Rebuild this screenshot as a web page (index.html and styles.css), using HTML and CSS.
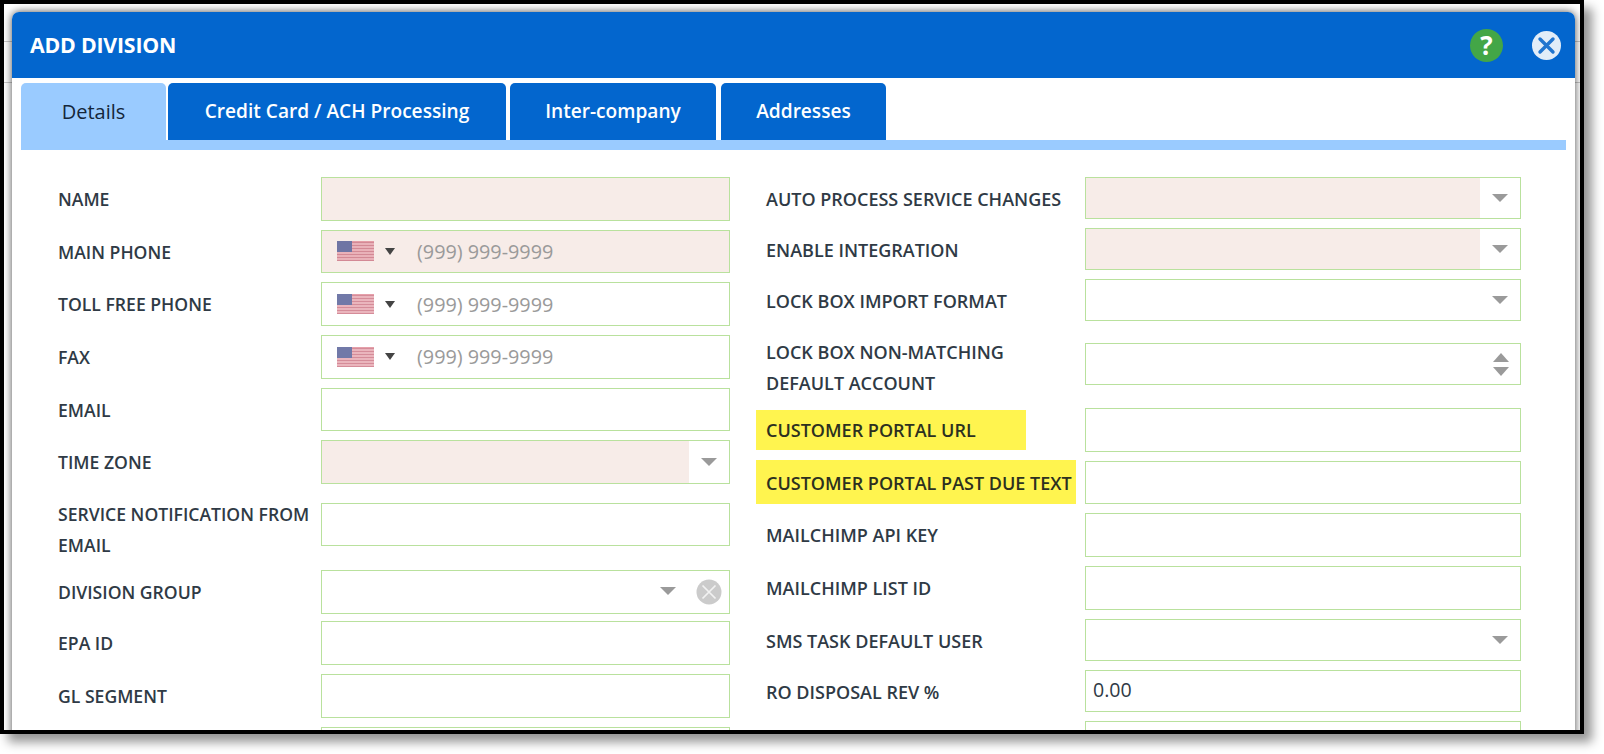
FILE: index.html
```html
<!DOCTYPE html>
<html lang="en">
<head>
<meta charset="utf-8">
<title>Add Division</title>
<link rel="stylesheet" href="styles.css">
</head>
<body>
<svg class="defs" width="0" height="0" aria-hidden="true">
  <defs>
    <g id="flag">
      <rect width="37" height="20" fill="#e08c98"/>
      <path d="M0 1.5h37M0 4.5h37M0 7.5h37M0 10.5h37M0 13.5h37M0 16.5h37M0 19.5h37" stroke="#c66c7c" stroke-width="1.2" opacity=".75"/>
      <path d="M0 3h37M0 6h37M0 9h37M0 12h37M0 15h37M0 18h37" stroke="#f1d4d8" stroke-width="1" opacity=".7"/>
      <rect width="15" height="11" fill="#525c96"/>
    </g>
  </defs>
</svg>
<div class="frame">
  <div class="modal">
    <header class="modal-head">
      <h1 class="modal-title">ADD DIVISION</h1>
      <div class="head-icons">
        <span class="help">?</span>
        <svg class="close" viewBox="0 0 29 29" aria-hidden="true">
          <circle cx="14.5" cy="14.5" r="14.5" fill="#e2edf8"/>
          <path d="M8 8l13 13M21 8l-13 13" stroke="#2175cf" stroke-width="3.4" stroke-linecap="round"/>
        </svg>
      </div>
    </header>
    <nav class="tabs">
      <a class="tab tab-active tab-details">Details</a>
      <a class="tab tab-card">Credit Card / ACH Processing</a>
      <a class="tab tab-inter">Inter-company</a>
      <a class="tab tab-addr">Addresses</a>
    </nav>
    <div class="tab-strip"></div>
    <form class="form">
      <div class="col col-left">
        <div class="row"><label class="lbl">NAME</label><div class="field req"></div></div>
        <div class="row"><label class="lbl">MAIN PHONE</label><div class="field req phone"><svg class="flag" viewBox="0 0 37 20"><use href="#flag"/></svg><i class="caret"></i><span class="ph">(999) 999-9999</span></div></div>
        <div class="row"><label class="lbl">TOLL FREE PHONE</label><div class="field phone"><svg class="flag" viewBox="0 0 37 20"><use href="#flag"/></svg><i class="caret"></i><span class="ph">(999) 999-9999</span></div></div>
        <div class="row"><label class="lbl">FAX</label><div class="field phone"><svg class="flag" viewBox="0 0 37 20"><use href="#flag"/></svg><i class="caret"></i><span class="ph">(999) 999-9999</span></div></div>
        <div class="row"><label class="lbl">EMAIL</label><div class="field"></div></div>
        <div class="row r-tz"><label class="lbl">TIME ZONE</label><div class="field select req-sel"><span class="sel-fill"></span><i class="arrow"></i></div></div>
        <div class="row r-svc"><label class="lbl lbl-two lbl-up4">SERVICE NOTIFICATION FROM EMAIL</label><div class="field"></div></div>
        <div class="row r-s"><label class="lbl">DIVISION GROUP</label><div class="field group"><i class="arrow"></i>
          <svg class="clear" viewBox="0 0 26 26" aria-hidden="true"><circle cx="13" cy="13" r="12.5" fill="#cbcbcb"/><path d="M6.5 6.5l13 13M19.5 6.5l-13 13" stroke="#f2f2f2" stroke-width="1.7"/></svg></div></div>
        <div class="row"><label class="lbl">EPA ID</label><div class="field"></div></div>
        <div class="row"><label class="lbl">GL SEGMENT</label><div class="field"></div></div>
        <div class="row"><label class="lbl"></label><div class="field"></div></div>
      </div>
      <div class="col col-right">
        <div class="row r-s"><label class="lbl">AUTO PROCESS SERVICE CHANGES</label><div class="field select sel-h req-sel"><span class="sel-fill"></span><i class="arrow"></i></div></div>
        <div class="row r-s"><label class="lbl">ENABLE INTEGRATION</label><div class="field select sel-h req-sel"><span class="sel-fill"></span><i class="arrow"></i></div></div>
        <div class="row r-lock"><label class="lbl">LOCK BOX IMPORT FORMAT</label><div class="field select sel-h"><i class="arrow"></i></div></div>
        <div class="row r-non"><label class="lbl lbl-two lbl-up7">LOCK BOX NON-MATCHING DEFAULT ACCOUNT</label><div class="field select sel-h"><i class="spin-up"></i><i class="spin-down"></i></div></div>
        <div class="row"><label class="lbl"><span class="hl hl-url">CUSTOMER PORTAL URL</span></label><div class="field"></div></div>
        <div class="row"><label class="lbl"><span class="hl hl-due">CUSTOMER PORTAL PAST DUE TEXT</span></label><div class="field"></div></div>
        <div class="row"><label class="lbl">MAILCHIMP API KEY</label><div class="field"></div></div>
        <div class="row"><label class="lbl">MAILCHIMP LIST ID</label><div class="field"></div></div>
        <div class="row r-s"><label class="lbl">SMS TASK DEFAULT USER</label><div class="field select sel-h"><i class="arrow"></i></div></div>
        <div class="row r-s"><label class="lbl">RO DISPOSAL REV %</label><div class="field sel-h value">0.00</div></div>
        <div class="row"><label class="lbl"></label><div class="field"></div></div>
      </div>
    </form>
  </div>
</div>
</body>
</html>
```
FILE: styles.css
```css
* { box-sizing: border-box; }
html, body { margin: 0; padding: 0; background: #fff; width: 1604px; height: 754px; overflow: hidden; }
body { font-family: "Open Sans", "Noto Sans", sans-serif; color: #2f3a45; }
.defs { display: block; height: 0; }

.frame {
  width: 1584px;
  height: 734px;
  border: 4px solid #000;
  overflow: hidden;
  padding: 8px 0 0 8px;
  box-shadow: 8px 8px 10px rgba(0, 0, 0, .42);
  background:
    linear-gradient(#c9c9c9, #c9c9c9) 0 37px / 100% 1px no-repeat,
    linear-gradient(#c9c9c9, #c9c9c9) 0 78px / 100% 1px no-repeat,
    #fff;
}

.modal {
  width: 1563px;
  height: 760px;
  background: #fff;
  border-radius: 7px 7px 0 0;
  box-shadow: 0 0 9px rgba(0, 0, 0, .7);
}

.modal-head {
  height: 66px;
  background: #0366ce;
  border-radius: 7px 7px 0 0;
  display: flex;
  align-items: center;
  justify-content: space-between;
  padding: 0 14px 0 18px;
}
.modal-title { margin: 0 0 2px; color: #fff; font-size: 21.3px; font-weight: 700; letter-spacing: -.2px; }
.head-icons { display: flex; align-items: center; gap: 29px; }
.help {
  width: 33px; height: 33px; border-radius: 50%;
  background: #43a647; color: #fff;
  font-size: 26px; font-weight: 700; line-height: 33px; text-align: center;
}
.close { width: 29px; height: 29px; display: block; }

.tabs { display: flex; gap: 2px; padding: 5px 0 0 9px; height: 62px; }
.tab {
  height: 57px;
  line-height: 57px;
  text-align: center;
  border-radius: 5px 5px 0 0;
  background: #0366ce;
  color: #fff;
  font-size: 19.1px;
  font-weight: 600;
}
.tab-active { background: #9acbff; color: #14263a; font-size: 20px; font-weight: 400; line-height: 57px; }
.tab-details { width: 145px; }
.tab-card { width: 338px; margin-right: 2px; }
.tab-inter { width: 206px; margin-right: 3px; }
.tab-addr { width: 165px; }
.tab-strip { height: 10px; margin: 0 9px; background: #9acbff; }

.form { display: flex; padding: 27px 0 0 46px; }
.col { display: flex; flex-direction: column; }
.col-left { width: 708px; }
.col-right { width: 755px; }

.row { display: flex; align-items: flex-start; height: 52.7px; }
.r-s { height: 51px; }
.r-tz { height: 62.5px; }
.r-svc { height: 67.5px; }
.r-lock { height: 64px; }
.r-non { height: 65px; }

.lbl {
  flex: none;
  font-size: 18px;
  font-weight: 600;
  line-height: 44px;
  color: #2f3a45;
}
.col-left .lbl { width: 263px; font-size: 17.6px; }
.col-right .lbl { width: 319px; }
.lbl-two { line-height: 31.5px; }
.col-right .lbl-two { padding-right: 20px; }
.lbl-up4 { margin-top: -4px; }
.lbl-up7 { margin-top: -6.5px; }

.hl { display: block; margin: 2px 0 0 -10px; padding-left: 10px; background: #fff44f; color: #2c3020; line-height: 40px; }
.hl-url { width: 270px; }
.hl-due { width: 320px; height: 44px; line-height: 46px; margin-top: -1px; white-space: nowrap; }

.field {
  flex: none;
  position: relative;
  height: 43.5px;
  border: 1px solid #b9e19d;
  background: #fff;
}
.col-left .field { width: 409px; }
.col-right .field { width: 436px; }
.sel-h { height: 42px; }
.req { background: #f7ece8; }

.phone { display: flex; align-items: center; padding-left: 15px; }
.flag { width: 37px; height: 20px; flex: none; filter: blur(.7px); opacity: .82; }
.caret {
  flex: none;
  margin: 0 22px 0 11px;
  border-left: 5px solid transparent;
  border-right: 5px solid transparent;
  border-top: 7px solid #444;
}
.ph { color: #9a9a9a; font-size: 19.8px; }

.select { background: #fff; }
.sel-fill { position: absolute; left: 0; top: 0; bottom: 0; right: 40px; background: #f7ece8; }
.arrow {
  position: absolute;
  right: 12px;
  top: 50%;
  margin-top: -4px;
  border-left: 8px solid transparent;
  border-right: 8px solid transparent;
  border-top: 8px solid #9a9a9a;
}
.group .arrow { right: 53px; margin-top: -5px; }
.clear { position: absolute; right: 7px; top: 8px; width: 26px; height: 26px; }
.spin-up, .spin-down {
  position: absolute;
  right: 11px;
  border-left: 8.5px solid transparent;
  border-right: 8.5px solid transparent;
}
.spin-up { top: 9px; border-bottom: 9px solid #9a9a9a; }
.spin-down { top: 23px; border-top: 9px solid #9a9a9a; }

.value { padding-left: 7px; font-size: 19.6px; line-height: 38px; color: #2f3a45; }
```
